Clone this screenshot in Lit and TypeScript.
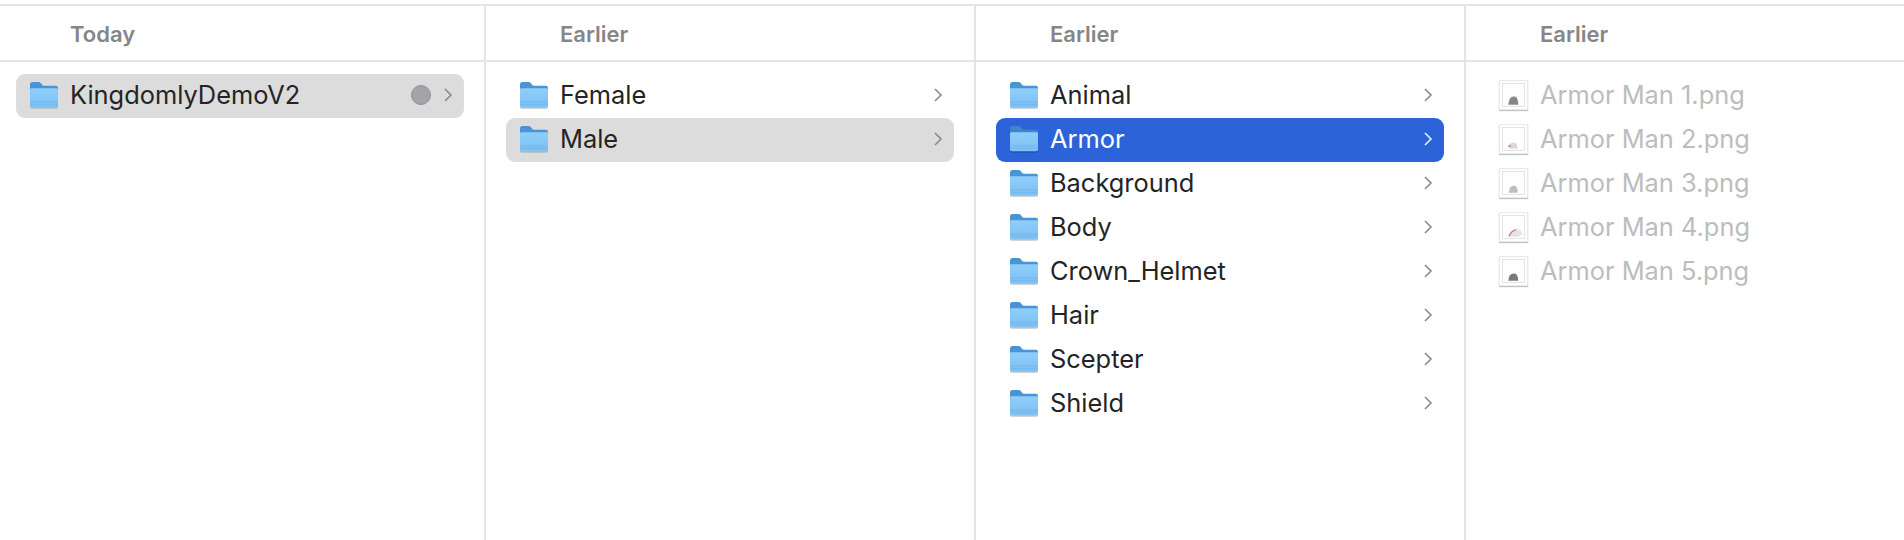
import { LitElement, html, css, svg } from "lit";
import { customElement } from "lit/decorators.js";

const folder = (sel = false) => html`<svg class="ico" viewBox="0 0 30 28" width="30" height="28">
  <defs><linearGradient id="fb" x1="0" y1="0" x2="0" y2="1"><stop offset="0" stop-color="#8fcefa"/><stop offset="1" stop-color="#7cc0f4"/></linearGradient></defs>
  <path d="M1 3.5Q1 1 3.5 1H9.5Q11 1 12 2.2L13.2 4Q13.8 4.8 15 4.8H27Q29 4.8 29 7V12H1Z" fill="${sel ? "#3f86c9" : "#4a94d6"}"/>
  <path d="M1 8.6Q1 7.2 2.4 7.2H27.6Q29 7.2 29 8.6V24.5Q29 26.6 27 26.6H3Q1 26.6 1 24.5Z" fill="url(#fb)"/>
  <path d="M1 21H29M1 23.2H29" stroke="#6fb2e8" stroke-width="0.7"/>
  <path d="M1 25Q1 26.6 3 26.6H27Q29 26.6 29 25V26Q29 27.6 27 27.6H3Q1 27.6 1 26Z" fill="${sel ? "#1f4f8f" : "#9aa7b4"}"/>
</svg>`;

const chev = (color: string) => html`<svg class="chev" viewBox="0 0 10 16" width="10" height="16"><path d="M2 2L8 8L2 14" fill="none" stroke="${color}" stroke-width="1.6"/></svg>`;

const arts = [
  svg`<path d="M6 23L7.5 16.5Q10 13 14.5 14Q17 15.5 17.5 23Z" fill="#85858c"/><path d="M8.5 16Q12 13 16 15.5" fill="none" stroke="#b58a88" stroke-width="1"/>`,
  svg`<path d="M7 23L8 17.5Q11 15 14.5 16.5Q16.5 18.5 17 23Z" fill="#dcd9d5"/><circle cx="7.5" cy="20" r="1.5" fill="#cf8f8f"/>`,
  svg`<path d="M6.5 23L8 17Q11 14 14.5 15.5Q16.5 17.5 17 23Z" fill="#bdbdbd"/>`,
  svg`<path d="M6 23Q8 16 14 14Q20 13.5 22.5 20L18 23Z" fill="#e6e3e1"/><path d="M7 22.5Q9 17 14.5 15" fill="none" stroke="#c47c7a" stroke-width="1.6"/>`,
  svg`<path d="M6 23L7.5 17Q10.5 14 14.5 15Q17 16.5 17.5 23Z" fill="#78797a"/>`,
];

@customElement("app-root")
export class AppRoot extends LitElement {
  static styles = css`
    :host { display: block; width: 1904px; height: 540px; background: #fff; overflow: hidden;
      font-family: Inter, "Liberation Sans", sans-serif; color: #242424; }
    .wrap { height: 540px; box-sizing: border-box; padding-top: 4px; }
    .board { height: 536px; border-top: 2px solid #e4e4e4; display: grid; grid-template-columns: 486px 490px 490px 438px; }
    .col { border-right: 2px solid #e4e4e4; display: flex; flex-direction: column; min-width: 0; }
    .col:last-child { border-right: 0; }
    .head { height: 56px; box-sizing: border-box; border-bottom: 2px solid #e4e4e4; padding-left: var(--tx); display: flex; align-items: center;
      font-size: 22px; font-weight: 600; color: #868686; padding-top: 1px; }
    .list { padding: 12px 20px 0 var(--lx); display: flex; flex-direction: column; }
    .row { height: 44px; box-sizing: border-box; border-radius: 9px; display: flex; align-items: center; padding: 0 11px 2px 13px; font-size: 25.4px; white-space: nowrap; }
    .row.gray { background: #dcdcdc; }
    .row.blue { background: #2c63d9; color: #fff; }
    .ico { flex: none; margin-right: 11px; }
    .name { flex: 1; padding-bottom: 1px; }
    .chev { flex: none; }
    .dot { width: 20px; height: 20px; border-radius: 50%; background: #a4a3a8; border: 1px solid #929196; box-sizing: border-box; margin-right: 12px; }
    .files .row { color: #bdbdbd; padding-left: 14px; }
    .thumb { flex: none; width: 29px; height: 30px; box-sizing: border-box; margin-right: 12px; background: #fff; border: 1px solid #e9e9e9; box-shadow: 0 1px 1px #c4c4c4; padding: 2px; display: flex; }
    .thumb svg { flex: 1; border: 1px solid #e4e4e4; }
  `;

  private folderRow(name: string, cls = "", dot = false) {
    const sel = cls === "blue";
    return html`<div class="row ${cls}">${folder(sel)}<span class="name">${name}</span>${dot ? html`<span class="dot"></span>` : ""}${chev(sel ? "#e8eefc" : "#8a8a8a")}</div>`;
  }

  render() {
    const col3 = ["Animal", "Armor", "Background", "Body", "Crown_Helmet", "Hair", "Scepter", "Shield"];
    return html`<div class="wrap"><div class="board">
      <div class="col" style="--tx:70px;--lx:16px">
        <div class="head">Today</div>
        <div class="list">${this.folderRow("KingdomlyDemoV2", "gray", true)}</div>
      </div>
      <div class="col" style="--tx:74px;--lx:20px">
        <div class="head">Earlier</div>
        <div class="list">${this.folderRow("Female")}${this.folderRow("Male", "gray")}</div>
      </div>
      <div class="col" style="--tx:74px;--lx:20px">
        <div class="head">Earlier</div>
        <div class="list">${col3.map((n) => this.folderRow(n, n === "Armor" ? "blue" : ""))}</div>
      </div>
      <div class="col files" style="--tx:74px;--lx:19px">
        <div class="head">Earlier</div>
        <div class="list">${arts.map((a, i) => html`<div class="row"><span class="thumb"><svg viewBox="0 0 24 24">${a}</svg></span><span class="name">Armor Man ${i + 1}.png</span></div>`)}</div>
      </div>
    </div></div>`;
  }
}
